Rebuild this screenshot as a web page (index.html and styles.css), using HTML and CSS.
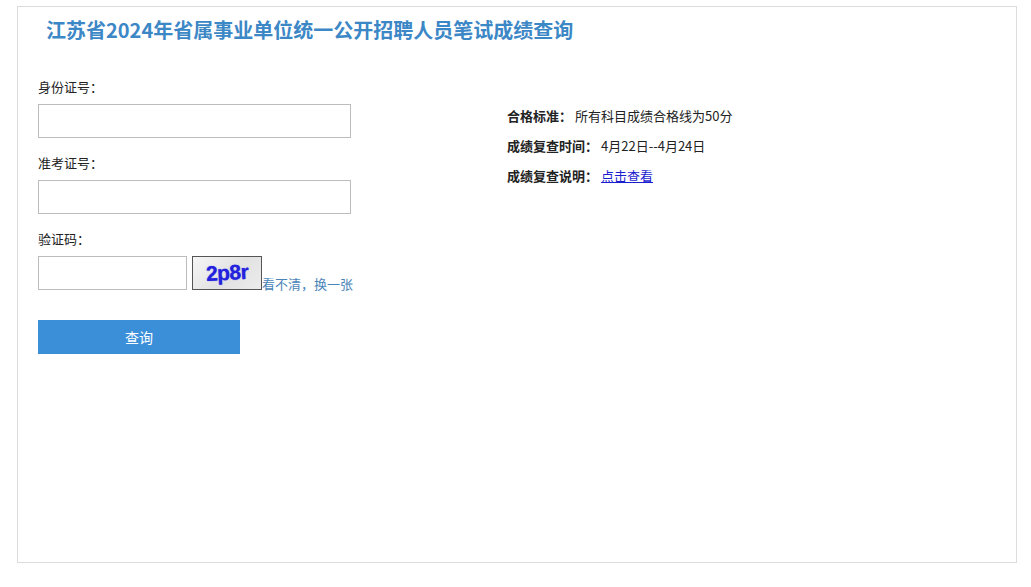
FILE: index.html
```html
<!DOCTYPE html>
<html lang="zh-CN">
<head>
    <meta charset="UTF-8">
    <title>江苏省2024年省属事业单位统一公开招聘人员笔试成绩查询</title>
    <link rel="stylesheet" href="styles.css">
</head>
<body>
    <div class="page">
        <h1 class="title">江苏省2024年省属事业单位统一公开招聘人员笔试成绩查询</h1>

        <div class="main">
            <form class="query-form" onsubmit="return false;">
                <div class="field">
                    <label for="idcard">身份证号：</label>
                    <input type="text" id="idcard" class="text-input">
                </div>
                <div class="field">
                    <label for="examno">准考证号：</label>
                    <input type="text" id="examno" class="text-input">
                </div>
                <div class="field">
                    <label for="code">验证码：</label>
                    <div class="captcha-row">
                        <input type="text" id="code" class="text-input code-input">
                        <span class="captcha-img"><span class="captcha-text">2p8r</span></span>
                        <a href="#" class="refresh-link">看不清，换一张</a>
                    </div>
                </div>
                <button type="submit" class="submit-btn">查询</button>
            </form>

            <div class="info">
                <p><b>合格标准：</b>所有科目成绩合格线为50分</p>
                <p><b>成绩复查时间：</b>4月22日--4月24日</p>
                <p><b>成绩复查说明：</b><a href="#" class="info-link">点击查看</a></p>
            </div>
        </div>
    </div>
</body>
</html>
```

FILE: styles.css
```css
* {
    margin: 0;
    padding: 0;
    box-sizing: border-box;
}

body {
    font-family: "Noto Sans CJK SC", "Liberation Sans", sans-serif;
    font-size: 13px;
    color: #222;
    background: #fff;
}

.page {
    width: 1000px;
    height: 557px;
    margin: 6px 0 0 17px;
    border: 1px solid #dcdcdc;
    background: #fff;
}

.title {
    margin-top: 9px;
    padding-left: 28px;
    font-size: 20px;
    line-height: 28px;
    font-weight: bold;
    color: #3c87c6;
}

.main {
    display: flex;
    margin-top: 34px;
    padding-left: 20px;
}

.query-form {
    width: 469px;
}

.field {
    margin-bottom: 16px;
}

.field label {
    display: block;
    line-height: 18px;
    margin-bottom: 8px;
}

.text-input {
    display: block;
    width: 313px;
    height: 34px;
    border: 1px solid #bcbcbc;
    font-size: 13px;
    padding: 0 6px;
}

.captcha-row {
    display: flex;
    align-items: flex-end;
}

.code-input {
    width: 149px;
}

.captcha-img {
    display: flex;
    align-items: center;
    justify-content: center;
    width: 70px;
    height: 34px;
    margin-left: 5px;
    border: 1px solid #555;
    background: linear-gradient(135deg, #f6f6f6 0%, #e2e2e2 55%, #ececec 100%);
}

.captcha-text {
    font-family: "Liberation Sans", sans-serif;
    font-size: 21px;
    font-weight: bold;
    color: #2422dc;
    letter-spacing: -0.5px;
    text-shadow: 0 0 1px #4a48e8;
    transform: rotate(-3deg);
}

.refresh-link {
    color: #4a84b8;
    text-decoration: none;
    line-height: 16px;
    margin-bottom: -2px;
}

.submit-btn {
    display: block;
    width: 202px;
    height: 34px;
    margin-top: 30px;
    border: none;
    background: #3b8fd9;
    color: #fff;
    font-family: inherit;
    font-size: 14px;
    cursor: pointer;
}

.info {
    margin-top: 23px;
}

.info p {
    line-height: 30px;
}

.info b {
    margin-right: 3px;
}

.info-link {
    color: #1d1dd0;
}
```
